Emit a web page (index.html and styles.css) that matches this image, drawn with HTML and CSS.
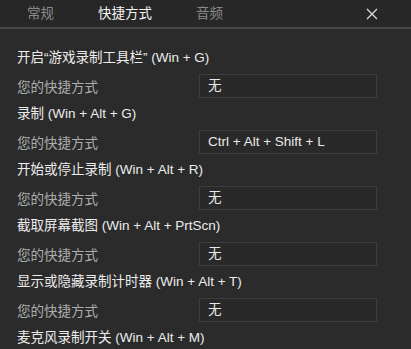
FILE: index.html
```html
<!DOCTYPE html>
<html lang="zh-CN">
<head>
  <meta charset="UTF-8" />
  <meta name="viewport" content="width=device-width, initial-scale=1.0" />
  <title>快捷方式</title>
  <link rel="stylesheet" href="styles.css">
</head>
<body>
  <div class="tabs">
    <span class="tab">常规</span>
    <span class="tab active">快捷方式</span>
    <span class="tab">音频</span>
    <span class="close">
      <svg width="12" height="12" viewBox="0 0 12 12"><path d="M1 1L11 11M11 1L1 11" stroke="#d8d8d8" stroke-width="1.4" fill="none"/></svg>
    </span>
  </div>

  <div class="content">
    <div class="group">
      <div class="title">开启“游戏录制工具栏” (Win + G)</div>
      <div class="row">
        <span class="label">您的快捷方式</span>
        <div class="field">无</div>
      </div>
    </div>
    <div class="group">
      <div class="title">录制 (Win + Alt + G)</div>
      <div class="row">
        <span class="label">您的快捷方式</span>
        <div class="field">Ctrl + Alt + Shift + L</div>
      </div>
    </div>
    <div class="group">
      <div class="title">开始或停止录制 (Win + Alt + R)</div>
      <div class="row">
        <span class="label">您的快捷方式</span>
        <div class="field">无</div>
      </div>
    </div>
    <div class="group">
      <div class="title">截取屏幕截图 (Win + Alt + PrtScn)</div>
      <div class="row">
        <span class="label">您的快捷方式</span>
        <div class="field">无</div>
      </div>
    </div>
    <div class="group">
      <div class="title">显示或隐藏录制计时器 (Win + Alt + T)</div>
      <div class="row">
        <span class="label">您的快捷方式</span>
        <div class="field">无</div>
      </div>
    </div>
    <div class="group">
      <div class="title">麦克风录制开关 (Win + Alt + M)</div>
    </div>
  </div>
</body>
</html>
```

FILE: styles.css
```css
body, html {
  margin: 0;
  padding: 0;
  height: 100%;
  overflow: hidden;
  background: #2b2b2b;
  font-family: "Segoe UI", "Liberation Sans", "Noto Sans CJK SC", sans-serif;
  color: #e8e8e8;
}
.tabs {
  display: flex;
  align-items: center;
  height: 27px;
  padding-left: 27px;
  gap: 44px;
  background: #272727;
  border-bottom: 2px solid #474747;
}
.tab {
  font-size: 13.5px;
  color: #8a8a8a;
  line-height: 27px;
}
.tab.active {
  color: #f2f2f2;
}
.close {
  margin-left: auto;
  margin-right: 33px;
  display: flex;
  align-items: center;
}
.content {
  padding: 15px 0 0 17px;
}
.group {
  display: flex;
  flex-direction: column;
}
.title {
  font-size: 13.5px;
  line-height: 28px;
  color: #ececec;
}
.row {
  display: flex;
  align-items: center;
  height: 28px;
}
.label {
  width: 182px;
  font-size: 13.5px;
  color: #acacac;
}
.field {
  width: 168px;
  height: 22px;
  line-height: 22px;
  padding-left: 8px;
  font-size: 13.5px;
  color: #eaeaea;
  background: #292929;
  border: 1px solid #3d3d3d;
}
```
